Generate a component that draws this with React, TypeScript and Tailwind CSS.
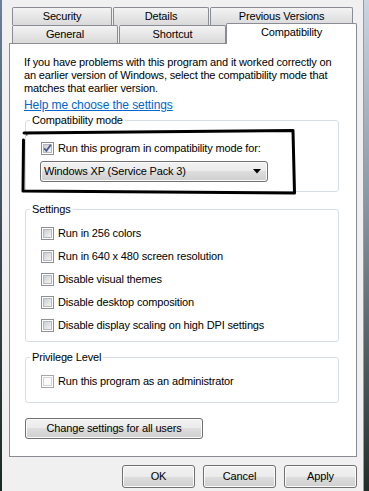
import type { ReactNode } from 'react'

const btnFace =
  'border border-[#707070] rounded-[3px] bg-[linear-gradient(#f2f2f2_0%,#ebebeb_50%,#dddddd_50%,#cfcfcf_100%)] shadow-[inset_0_0_0_1px_#fbfbfb]'

function Tab({ label, className }: { label: string; className: string }) {
  return (
    <div
      className={`flex items-center justify-center rounded-t-[2px] border border-b-0 border-[#898c95] bg-[linear-gradient(#f3f3f3,#e6e6e6_50%,#dadada)] ${className}`}
    >
      {label}
    </div>
  )
}

function Check({ checked, faint }: { checked?: boolean; faint?: boolean }) {
  return (
    <div
      className={`relative flex h-[13px] w-[13px] shrink-0 items-center justify-center border bg-white ${
        faint ? 'border-[#a7a7a7]' : 'border-[#8e8f8f]'
      }`}
    >
      <div
        className={`h-[9px] w-[9px] border ${
          faint
            ? 'border-[#d4d4d4] bg-[#fafafa]'
            : 'border-[#b4b9bf] bg-[linear-gradient(135deg,#c9cdd3,#f5f5f5)]'
        }`}
      />
      {checked ? (
        <svg className="absolute left-0 top-0" width="11" height="11" viewBox="0 0 11 11">
          <path d="M2.2 5.4 L4.4 7.8 L8.8 1.8" fill="none" stroke="#4b5e92" strokeWidth="1.9" />
        </svg>
      ) : null}
    </div>
  )
}

function Row({ children, checked, faint }: { children: ReactNode; checked?: boolean; faint?: boolean }) {
  return (
    <div className="flex h-[13px] items-center gap-[4px] pl-[1px]">
      <Check checked={checked} faint={faint} />
      <span className="whitespace-nowrap">{children}</span>
    </div>
  )
}

function Group({ title, className, children }: { title: string; className: string; children: ReactNode }) {
  return (
    <fieldset className={`ml-[1px] w-[314px] rounded-[3px] border border-[#d5dfe5] px-0 ${className}`}>
      <legend className="ml-[4px] px-[2px] leading-[13px]">{title}</legend>
      {children}
    </fieldset>
  )
}

export default function App() {
  return (
    <div className="relative flex h-[491px] w-[369px] overflow-hidden bg-[#f0f0f0] font-['Liberation_Sans',Arial,sans-serif] text-[11px] leading-[13px] tracking-[-0.15px] text-black">
      <div className="w-[2px] bg-[linear-gradient(#6c809a,#3c4a55_50%,#1b2923)]" />

      <div className="flex w-[361px] flex-col pl-[7px] pt-[7px]">
        {/* tab rows */}
        <div className="flex h-[18px] gap-px pl-[3px]">
          <Tab label="Security" className="h-[18px] w-[100px]" />
          <Tab label="Details" className="h-[18px] w-[96px]" />
          <Tab label="Previous Versions" className="h-[18px] w-[143px]" />
        </div>
        <div className="flex h-[18px] pl-[3px]">
          <Tab label="General" className="h-[18px] w-[106px]" />
          <Tab label="Shortcut" className="ml-px h-[18px] w-[107px]" />
          <div className="relative z-10 -mt-[2px] flex h-[21px] w-[131px] justify-center rounded-t-[2px] border border-b-0 border-[#898c95] bg-white pt-[2px]">
            Compatibility
          </div>
        </div>

        {/* page */}
        <div className="flex h-[414px] w-[348px] flex-col border border-[#898c95] bg-white pl-[14px]">
          <p className="mt-[12px] whitespace-nowrap">
            If you have problems with this program and it worked correctly on
            <br />
            an earlier version of Windows, select the compatibility mode that
            <br />
            matches that earlier version.
          </p>
          <span className="mt-[4px] self-start text-[12px] tracking-[-0.1px] text-[#0066cc] underline">
            Help me choose the settings
          </span>

          <Group title="Compatibility mode" className="mt-[2px] pb-[9px]">
            <div className="pl-[14px] pt-[15px]">
              <div className="h-[14px]">
                <Row checked>Run this program in compatibility mode for:</Row>
              </div>
              <div className={`mt-[5px] flex h-[21px] w-[228px] items-center justify-between pl-[3px] pr-[6px] ${btnFace}`}>
                <span>Windows XP (Service Pack 3)</span>
                <svg width="8" height="5" viewBox="0 0 8 5">
                  <path d="M0 0 H8 L4 4.5 Z" fill="#000" />
                </svg>
              </div>
            </div>
          </Group>

          <Group title="Settings" className="mt-[11px] pb-[9px]">
            <div className="flex flex-col gap-[10px] pl-[14px] pt-[11px]">
              <Row>Run in 256 colors</Row>
              <Row>Run in 640 x 480 screen resolution</Row>
              <Row>Disable visual themes</Row>
              <Row>Disable desktop composition</Row>
              <Row>Disable display scaling on high DPI settings</Row>
            </div>
          </Group>

          <Group title="Privilege Level" className="mt-[9px] pb-[14px]">
            <div className="pl-[14px] pt-[11px]">
              <Row faint>Run this program as an administrator</Row>
            </div>
          </Group>

          <div className={`ml-[1px] mt-[15px] flex h-[21px] w-[178px] items-center justify-center ${btnFace}`}>
            Change settings for all users
          </div>
        </div>

        {/* dialog buttons */}
        <div className="mt-[8px] flex w-[348px] justify-end gap-[8px]">
          {['OK', 'Cancel', 'Apply'].map((b) => (
            <div key={b} className={`flex h-[23px] w-[73px] items-center justify-center ${btnFace}`}>
              {b}
            </div>
          ))}
        </div>
      </div>

      <div className="w-px bg-[#9b9b9b]" />
      <div className="w-[5px] bg-[linear-gradient(#c9d5e3,#8a99a6_40%,#1f2d29)]" />

      {/* hand-drawn highlight */}
      <svg className="pointer-events-none absolute left-0 top-0" width="369" height="491" viewBox="0 0 369 491">
        <path
          d="M24 133 L293 130.5 L294.5 193 L23 191 L23.5 140"
          fill="none"
          stroke="#000"
          strokeWidth="3"
          strokeLinejoin="round"
          strokeLinecap="round"
        />
        <rect x="26" y="134" width="1.5" height="1.5" fill="#333" />
      </svg>
    </div>
  )
}
